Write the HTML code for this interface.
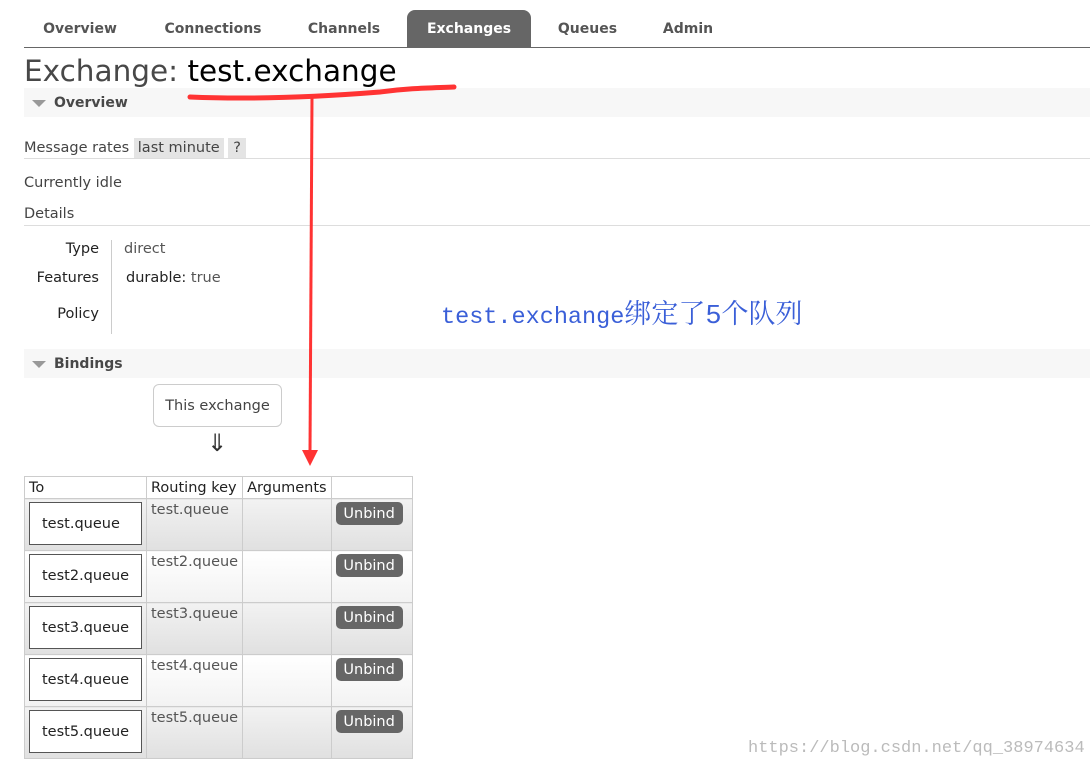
<!DOCTYPE html>
<html><head><meta charset="utf-8"><style>
*{margin:0;padding:0;box-sizing:border-box}
body{width:1090px;height:769px;background:#fff;position:relative;overflow:hidden;font-family:"DejaVu Sans",Verdana,sans-serif;font-size:13px;color:#444}
.a{position:absolute;white-space:nowrap}
.tab{position:absolute;top:12px;height:35px;line-height:35px;font-weight:bold;font-size:14px;color:#555;text-align:center}
.sec{position:absolute;left:24px;width:1066px;height:29px;background:#f7f7f7;font-weight:bold;font-size:14px;color:#484848;line-height:31px;padding-left:30px}
.sec:before{content:"";position:absolute;left:8px;top:12px;border-left:7px solid transparent;border-right:7px solid transparent;border-top:7px solid #999}
table{position:absolute;left:24px;top:476px;border-collapse:collapse;font-size:14.5px}
td,th{border:1px solid #ccc;vertical-align:top;text-align:left;font-weight:normal}
th{height:22px;padding:3px 4px 0;color:#222;background:#fff}
td{height:52px}
tr.o td{background:linear-gradient(#f2f2f2,#e0e0e0)}
tr.e td{background:linear-gradient(#fff,#f2f2f2)}
.q{margin:3px 4px 0 4px;width:113px;height:43px;border:1px solid #555;background:#fff;line-height:43px;padding-left:12px;color:#222;font-size:14.5px}
.rk{padding:3px 4px;color:#555;font-size:14.5px}
.ub{margin:3px 0 0 4px;width:67px;height:23px;background:#666;border-radius:5px;color:#fff;text-align:center;line-height:25px;font-size:14.5px}
</style></head><body>
<div class="a" style="left:24px;top:47px;width:1066px;height:1px;background:#666"></div>
<div class="tab" style="left:24px;width:112px">Overview</div>
<div class="tab" style="left:146px;width:134px">Connections</div>
<div class="tab" style="left:290px;width:108px">Channels</div>
<div class="tab" style="left:407px;width:124px;background:#666;color:#fff;border-radius:8px 8px 0 0;top:10px;height:37px;line-height:39px">Exchanges</div>
<div class="tab" style="left:545px;width:85px">Queues</div>
<div class="tab" style="left:648px;width:80px">Admin</div>
<div class="a" style="left:24px;top:54px;font-size:29.5px;color:#484848">Exchange: <span style="color:#000">test.exchange</span></div>
<div class="sec" style="top:88px">Overview</div>
<div class="a" style="left:24px;top:140px;font-size:14.5px">Message rates <span style="background:#e4e4e4;padding:2px 4px">last minute</span> <span style="background:#e4e4e4;padding:2px 5px">?</span></div>
<div class="a" style="left:24px;top:158px;width:1066px;height:1px;background:#ddd"></div>
<div class="a" style="left:24px;top:175px;font-size:14.5px">Currently idle</div>
<div class="a" style="left:24px;top:206px;font-size:14.5px">Details</div>
<div class="a" style="left:24px;top:225px;width:1066px;height:1px;background:#ddd"></div>
<div class="a" style="left:111px;top:240px;width:1px;height:94px;background:#ccc"></div>
<div class="a" style="left:24px;top:241px;width:75px;text-align:right;font-size:14.5px;color:#222">Type</div>
<div class="a" style="left:24px;top:270px;width:75px;text-align:right;font-size:14.5px;color:#222">Features</div>
<div class="a" style="left:24px;top:306px;width:75px;text-align:right;font-size:14.5px;color:#222">Policy</div>
<div class="a" style="left:124px;top:241px;font-size:14.5px;color:#555">direct</div>
<div class="a" style="left:126px;top:270px;font-size:14.5px;color:#222">durable: <span style="color:#555">true</span></div>
<div class="a" style="left:441px;top:292px;font-size:23.5px;color:#3a5fd8;font-family:'Liberation Mono','Noto Serif CJK SC',monospace">test.exchange<span style="font-size:27px">绑定了5个队列</span></div>
<div class="sec" style="top:349px">Bindings</div>
<div class="a" style="left:153px;top:384px;width:129px;height:43px;border:1px solid #ccc;border-radius:6px;line-height:43px;text-align:center;font-size:14.5px;color:#444">This exchange</div>
<div class="a" style="left:207px;top:429px;font-size:24px;color:#333">⇓</div>
<table>
<tr><th style="width:122px">To</th><th style="width:96px">Routing key</th><th style="width:88px">Arguments</th><th style="width:81px"></th></tr>
<tr class="o"><td><div class="q">test.queue</div></td><td class="rk">test.queue</td><td></td><td><div class="ub">Unbind</div></td></tr>
<tr class="e"><td><div class="q">test2.queue</div></td><td class="rk">test2.queue</td><td></td><td><div class="ub">Unbind</div></td></tr>
<tr class="o"><td><div class="q">test3.queue</div></td><td class="rk">test3.queue</td><td></td><td><div class="ub">Unbind</div></td></tr>
<tr class="e"><td><div class="q">test4.queue</div></td><td class="rk">test4.queue</td><td></td><td><div class="ub">Unbind</div></td></tr>
<tr class="o"><td><div class="q">test5.queue</div></td><td class="rk">test5.queue</td><td></td><td><div class="ub">Unbind</div></td></tr>
</table>
<div class="a" style="left:748px;top:739px;font-size:17px;color:#bbb;font-family:'Liberation Mono',monospace">https://blog.csdn.net/qq_38974634</div>
<svg class="a" style="left:0;top:0" width="1090" height="769">
<path d="M190 97 C260 100 330 96 380 92 C410 88 430 88 454 87" stroke="#f33" stroke-width="5" fill="none" stroke-linecap="round"/>
<path d="M312 97 L310 452" stroke="#f33" stroke-width="3" fill="none"/>
<path d="M302 450 L318 450 L310 466 Z" fill="#f33"/>
</svg>
</body></html>
